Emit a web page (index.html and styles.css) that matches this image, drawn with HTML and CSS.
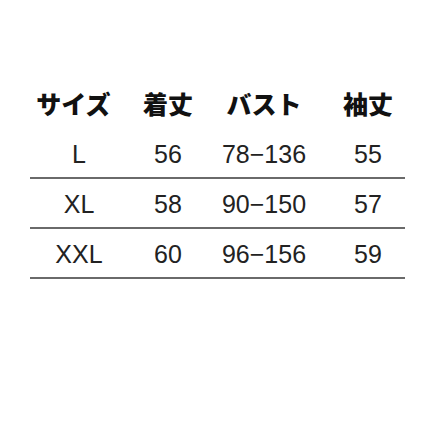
FILE: index.html
```html
<!DOCTYPE html>
<html lang="ja">
<head>
<meta charset="utf-8">
<link rel="stylesheet" href="styles.css">
</head>
<body>
<div class="size-table">
  <div class="row head">
    <div class="cell c1">サイズ</div>
    <div class="cell c2">着丈</div>
    <div class="cell c3">バスト</div>
    <div class="cell c4">袖丈</div>
  </div>
  <div class="row data">
    <div class="cell c1">L</div>
    <div class="cell c2">56</div>
    <div class="cell c3">78−136</div>
    <div class="cell c4">55</div>
  </div>
  <div class="row data">
    <div class="cell c1">XL</div>
    <div class="cell c2">58</div>
    <div class="cell c3">90−150</div>
    <div class="cell c4">57</div>
  </div>
  <div class="row data">
    <div class="cell c1">XXL</div>
    <div class="cell c2">60</div>
    <div class="cell c3">96−156</div>
    <div class="cell c4">59</div>
  </div>
</div>
</body>
</html>
```

FILE: styles.css
```css
html, body {
  margin: 0;
  padding: 0;
  background: #ffffff;
}

.size-table {
  width: 375px;
  margin-left: 30px;
  padding-top: 76px;
}

.row {
  display: grid;
  grid-template-columns: 98px 80px 112px 85px;
}

.cell {
  text-align: center;
}

.head {
  height: 53px;
  align-items: center;
  font-family: "Noto Sans CJK JP", sans-serif;
  font-weight: 900;
  font-size: 25px;
  line-height: 30px;
  color: #111111;
}

.head .c1 {
  padding-right: 11px;
}

.data {
  padding-top: 2px;
  height: 46px;
  border-bottom: 2px solid #6a6a6a;
  font-family: "Liberation Sans", Arial, sans-serif;
  font-size: 25px;
  line-height: 46px;
  color: #222222;
}

.c4 {
  padding-left: 11px;
}
```
